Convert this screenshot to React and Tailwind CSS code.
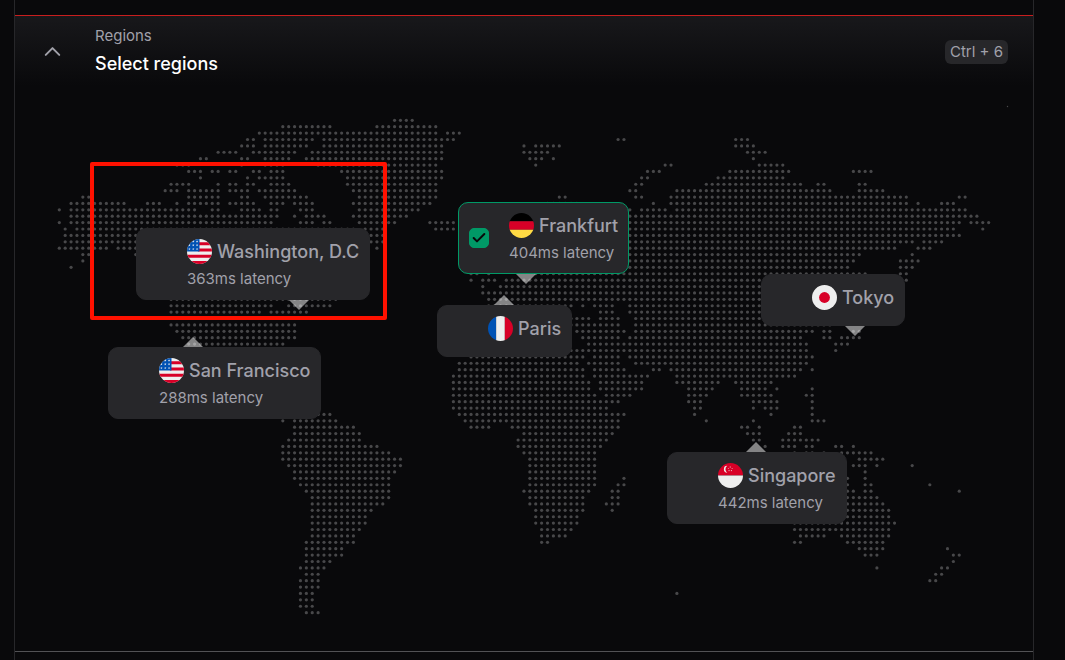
import React, { useState } from 'react';
import { Check, ChevronUp } from 'lucide-react';

const MAP_W = 1018;
const MAP_H = 565;

// Land cells of the dotted map: one string per row, each a list of column spans.
const ROWS = [
  '57-60',
  '38-46 54-64',
  '34-64 66-68',
  '32-33 35-43 45-67 95-96 115-117',
  '31-33 35-42 45-65 79 81-85 115-118',
  '27-30 33-40 43-65 79-83 117-120',
  '24-25 31-32 35-39 42-65 80-82 84 118',
  '20-22 31 35-38 44-64 81 103-104 119-123',
  '22-24 26-27 29-30 33-34 36-38 48-65 100-102 114-124 135-138',
  '24 32 34-38 49-65 99-100 112-123',
  '19-22 27 29-30 32-33 36-39 49-64 98-99 110-126 129-130 136-137',
  '18-20 22-27 29-30 31-32 34-40 50-64 97-98 105-131 136-140',
  '4-5 22-27 31-32 35-42 51-64 85-86 98-99 104-144 153-154',
  '2-11 15-17 20 22-27 29-33 36-38 40-43 50-63 83-88 101 104-144 146 150-152',
  '0 2-23 26-27 31-34 36-37 41-43 51-61 97 99-103 105-154',
  '2-37 40 42-45 50-59 97-156',
  '0 2-36 41-43 45-46 51-57 63-67 97-153 155-158',
  '1 3-50 52-55 64-67 97-152 157',
  '1-50 53-55 97-153',
  '1-50 53-55 97-145 147-150',
  '0-8 10-50 54 97-142 146-148',
  '4-5 13-50 97-136 145',
  '4 14-50 97-135 143-146',
  '2 14-50 97-134 143-145',
  '15-50 70-71 73 81-137 143-144',
  '16-50 70 72-74 76-137 144',
  '17-50 72 75-137',
  '18-49 72-136',
  '19-47 73-136',
  '19-36 39-46 73-87 89 91-94 97-134',
  '19-34 36-42 74-86 92-94 97-133',
  '19-42 74-90 92-95 98-132',
  '19-40 74-95 98-131',
  '20-40 74-85 88-96 98-128 130-131 135-136',
  '21-40 89-95 97-126 130-131 133-136',
  '22-38 90-127 132-134',
  '23-36 87-127 132',
  '24-34 70-89 91-95 97-128',
  '25-32 68-88 90-95 98-127',
  '26-32 68-89 91-96 101-102 104-126 128',
  '27-32 67-89 91-100 105-125',
  '28-34 67-90 92-99 105-112 115-121',
  '30-36 44 67-90 92-99 107-111 116-120 122 128',
  '67-91 93-97 107-110 116-121 127-128',
  '67-95 107-109 118-122 128',
  '67-93 108-109 118 120-122 128',
  '44-46 68-96 108 121 128',
  '38 40-47 69-95 110 118 128-130',
  '40-50 70-73 77-95 116-117 119 125-126',
  '40-51 79-94 117-119 124-126',
  '39-51 78-93 118-119 123-129',
  '38-54 78-92 120 123-125 127-128 132-133 135',
  '38-56 79-91 125 127-128 130 133-138',
  '38-58 80-91 136-140',
  '39-58 80-91 135-137 139 145',
  '40-57 80-91 137',
  '40-56 80-91 96 134 137',
  '41-56 80-91 95-96 134 137-138 148',
  '42-56 79-90 94-95 134-135 137-138 153',
  '43-56 80-89 94-95 134-139',
  '43-55 80-89 93-95 134-140',
  '43-53 81-89 94 134-141',
  '43-52 81-88 134-141',
  '43-52 81-88 125-142',
  '43-51 82-87 125-141',
  '43-50 82-86 126-130 133-141',
  '42-50 82-83 125-126 134-140',
  '42-48 136-140 151',
  '42-48 137-139 152-153',
  '42-46 152',
  '41-45 139 150-151',
  '42-44 149-150',
  '41-44 148-149',
  '41-44',
  '41-43 105',
  '41-43',
  '41-43',
  '42-44',
];

const DOTS = ROWS.flatMap((row, r) =>
  row.split(' ').flatMap((span) => {
    const [from, to = from] = span.split('-').map(Number);
    return Array.from({ length: to - from + 1 }, (_, i) => [
      44.3 + (from + i) * 5.882,
      34.3 + r * 6.394,
    ]);
  })
);

function DottedMap() {
  return (
    <svg viewBox={`0 0 ${MAP_W} ${MAP_H}`} className="block w-full fill-[#48484a]" aria-hidden="true">
      {DOTS.map(([x, y]) => (
        <circle key={`${x}-${y}`} cx={x} cy={y} r="1.6" />
      ))}
      <circle cx="992.5" cy="20.5" r="0.7" />
    </svg>
  );
}

const STAR = 'M0-21 5-7 20-7 8 2 12 17 0 8-12 17-8 2-20-7-5-7z';

function FlagArt({ code }) {
  switch (code) {
    case 'us':
      return (
        <>
          <path fill="#eee" d="M0 0h512v512H0z" />
          <path fill="#d80027" d="M224 64h288v64H224zM224 192h288v64H224zM0 320h512v64H0zM0 448h512v64H0z" />
          <path fill="#0052b4" d="M0 0h256v256H0z" />
          {[50, 128, 206].flatMap((y) =>
            [50, 128, 206].map((x) => (
              <path key={`${x}-${y}`} fill="#eee" d={STAR} transform={`translate(${x} ${y}) scale(1.25)`} />
            ))
          )}
        </>
      );
    case 'de':
      return (
        <>
          <path fill="#000" d="M0 0h512v167H0z" />
          <path fill="#d80027" d="M0 167h512v178H0z" />
          <path fill="#ffda44" d="M0 345h512v167H0z" />
        </>
      );
    case 'fr':
      return (
        <>
          <path fill="#0052b4" d="M0 0h167v512H0z" />
          <path fill="#eee" d="M167 0h178v512H167z" />
          <path fill="#d80027" d="M345 0h167v512H345z" />
        </>
      );
    case 'jp':
      return (
        <>
          <path fill="#eee" d="M0 0h512v512H0z" />
          <circle cx="256" cy="256" r="111" fill="#d80027" />
        </>
      );
    default:
      return (
        <>
          <path fill="#d80027" d="M0 0h512v256H0z" />
          <path fill="#eee" d="M0 256h512v256H0z" />
          <path fill="#eee" d="M190 58a70 70 0 0 0 0 140a84 84 0 0 1 0-140z" />
          {[[250, 84], [211, 112], [289, 112], [226, 156], [274, 156]].map(([x, y]) => (
            <path key={x} fill="#eee" d={STAR} transform={`translate(${x} ${y}) scale(0.75)`} />
          ))}
        </>
      );
  }
}

function Flag({ code }) {
  return (
    <svg viewBox="0 0 512 512" className="size-[25px] shrink-0 rounded-full" aria-hidden="true">
      <FlagArt code={code} />
    </svg>
  );
}

const REGIONS = [
  { id: 'iad', name: 'Washington, D.C', code: 'us', latency: 363, x: 121, y: 142, tip: 163, side: 'down' },
  { id: 'sfo', name: 'San Francisco', code: 'us', latency: 288, x: 93, y: 261, tip: 85, side: 'up' },
  { id: 'fra', name: 'Frankfurt', code: 'de', latency: 404, x: 443, y: 116, tip: 68, side: 'down' },
  { id: 'par', name: 'Paris', code: 'fr', x: 422, y: 219, tip: 67, side: 'up' },
  { id: 'tyo', name: 'Tokyo', code: 'jp', x: 746, y: 188, tip: 94, side: 'down' },
  { id: 'sin', name: 'Singapore', code: 'sg', latency: 442, x: 652, y: 366, tip: 89, side: 'up' },
];

function RegionPin({ region, checked, onChange }) {
  const { id, name, code, latency, x, y, tip, side } = region;
  return (
    <div
      className="absolute"
      style={{ left: `${(x / MAP_W) * 100}%`, top: `${(y / MAP_H) * 100}%` }}
    >
      <label
        htmlFor={id}
        className={`group flex min-h-[52px] cursor-pointer gap-5 whitespace-nowrap rounded-[10px] border bg-[#27272a] px-[10px] pt-[7px] pb-2 ${
          checked ? 'border-emerald-600' : 'border-[#27272a]'
        }`}
      >
        <span className="relative size-5 shrink-0 self-center">
          <input
            id={id}
            type="checkbox"
            checked={checked}
            onChange={onChange}
            className="block size-5 appearance-none rounded-[5px] border border-zinc-500 opacity-0 checked:border-emerald-600 checked:bg-emerald-600 checked:opacity-100 group-hover:opacity-100"
          />
          {checked && (
            <Check className="pointer-events-none absolute inset-0 m-auto size-4 text-[#09090b]" strokeWidth={3} />
          )}
        </span>
        <span className="block">
          <span className="flex h-[30px] items-center gap-[5px] text-[18px] font-medium text-[#a1a1aa]">
            <Flag code={code} />
            {name}
          </span>
          {latency && (
            <span className="mt-px block text-[15px] leading-6 text-[#a1a1aa]">{latency}ms latency</span>
          )}
        </span>
      </label>
      <svg
        viewBox="0 0 20 10"
        className={`absolute h-[10px] w-5 -translate-x-1/2 fill-white/50 ${
          side === 'down' ? 'top-full' : 'bottom-full'
        }`}
        style={{ left: tip }}
        aria-hidden="true"
      >
        <path d={side === 'down' ? 'M0 0h20L10 10z' : 'M0 10h20L10 0z'} />
      </svg>
    </div>
  );
}

export default function App() {
  const [selected, setSelected] = useState(['fra']);
  const toggle = (id) =>
    setSelected((s) => (s.includes(id) ? s.filter((v) => v !== id) : [...s, id]));

  return (
    <div className="min-h-screen bg-[#09090b] font-['Inter',sans-serif]">
      <main className="ml-[14px] mr-[31px] min-h-screen border-x border-[#27272a] pt-[15px]">
        <section className="border-y border-t-[#c81e1e] border-b-[#525255]">
          <header className="flex h-[70px] items-start bg-linear-to-b from-[#18181b] to-[#09090b] pr-[25px] pl-6">
            <button type="button" aria-label="Collapse regions" className="mt-[22px] text-[#a1a1aa]">
              <ChevronUp className="size-[27px]" strokeWidth={1.75} />
            </button>
            <div className="ml-[29px] flex-1 pt-2">
              <p className="text-[15px] leading-6 text-[#a1a1aa]">Regions</p>
              <h2 className="mt-[2px] text-[18px] leading-7 font-medium text-white">Select regions</h2>
            </div>
            <kbd className="mt-6 rounded-md bg-[#27272a] px-[5px] font-['Inter',sans-serif] text-[15px] leading-6 text-[#a1a1aa]">
              Ctrl + 6
            </kbd>
          </header>
          <div className="relative">
            <DottedMap />
            {REGIONS.map((region) => (
              <RegionPin
                key={region.id}
                region={region}
                checked={selected.includes(region.id)}
                onChange={() => toggle(region.id)}
              />
            ))}
            <div className="pointer-events-none absolute top-[76px] left-[75px] h-[158px] w-[297px] rounded-[2px] border-4 border-[#ff1100]" />
          </div>
        </section>
      </main>
    </div>
  );
}
